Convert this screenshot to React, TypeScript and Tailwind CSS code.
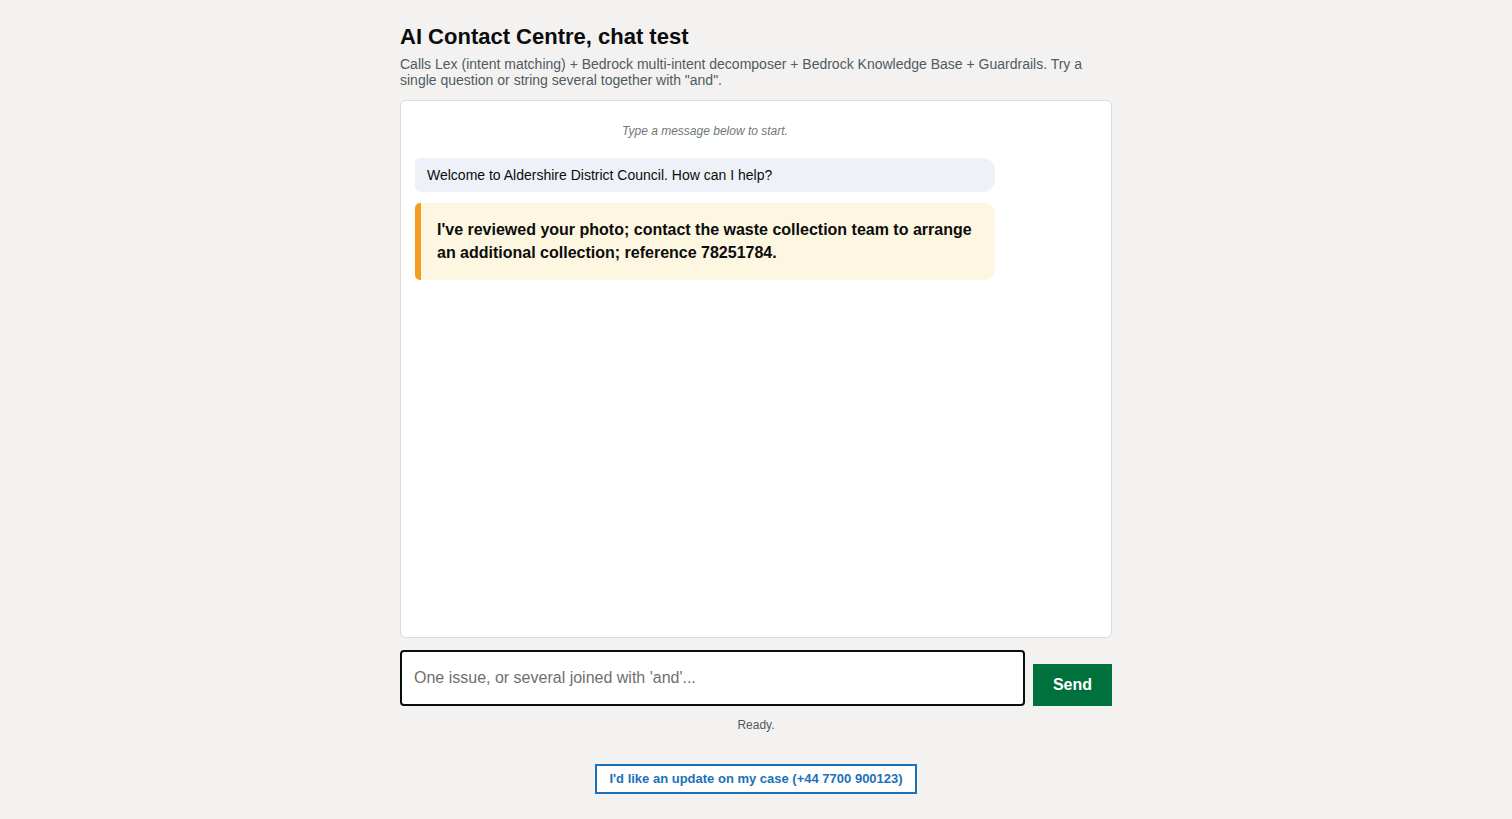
import React, { useState } from "react";

const App: React.FC = () => {
  const [text, setText] = useState("");

  return (
    <div className="min-h-screen bg-[#f3f2f1] font-['Liberation_Sans',Arial,sans-serif] text-[#0b0c0c]">
      <main className="mx-auto w-[712px] pt-[23px] pb-6">
        <h1 className="text-[22px] font-bold leading-[28px]">AI Contact Centre, chat test</h1>
        <p className="mt-[5px] text-[14px] leading-[16px] text-[#505a5f]">
          Calls Lex (intent matching) + Bedrock multi-intent decomposer + Bedrock Knowledge Base + Guardrails. Try a
          single question or string several together with "and".
        </p>

        {/* chat log */}
        <section className="mt-[12px] h-[538px] rounded-[6px] border border-[#dcdcdc] bg-white px-[14px] pt-[22px]">
          <div className="flex w-[580px] flex-col gap-[11px]">
            <p className="mb-[8px] text-center text-[12px] italic leading-[16px] text-[#6f777b]">
              Type a message below to start.
            </p>
            <div className="rounded-[12px] rounded-l-[5px] bg-[#eef2f8] px-[12px] py-[8px] text-[14px] leading-[18px]">
              Welcome to Aldershire District Council. How can I help?
            </div>
            <div className="rounded-[12px] rounded-l-[5px] border-l-[6px] border-[#f29d1e] bg-[#fdf6e0] pt-[15px] pb-[16px] pl-[16px] pr-[14px] text-[16px] font-bold leading-[23px]">
              I've reviewed your photo; contact the waste collection team to arrange an additional collection; reference
              78251784.
            </div>
          </div>
        </section>

        {/* composer */}
        <form className="mt-[12px] flex items-end gap-[8px]" onSubmit={(e) => e.preventDefault()}>
          <input
            value={text}
            onChange={(e) => setText(e.target.value)}
            placeholder="One issue, or several joined with 'and'..."
            className="h-[56px] flex-1 rounded-[4px] border-2 border-[#0b0c0c] bg-white px-[12px] text-[16px] outline-none placeholder:text-[#6f6f6f]"
          />
          <button
            type="submit"
            className="h-[42px] w-[79px] bg-[#00703c] text-[16px] font-bold text-white"
          >
            Send
          </button>
        </form>
        <p className="mt-[11px] text-center text-[12px] leading-[16px] text-[#505a5f]">Ready.</p>

        <div className="mt-[31px] flex justify-center">
          <button className="h-[30px] border-2 border-[#1d70b8] bg-white px-[12px] text-[13px] font-bold text-[#1d70b8]">
            I'd like an update on my case (+44 7700 900123)
          </button>
        </div>
      </main>
    </div>
  );
};

export default App;
